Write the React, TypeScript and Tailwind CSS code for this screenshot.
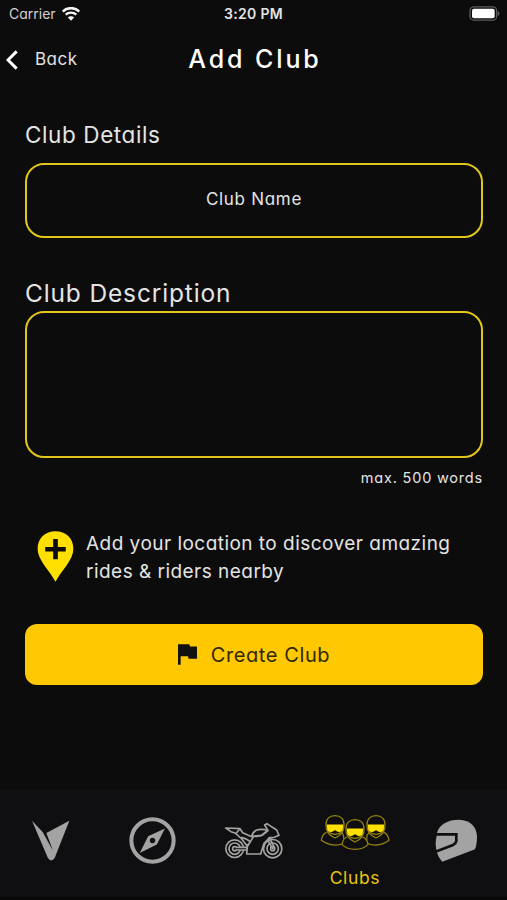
import type { ReactNode } from "react";

function StatusBar() {
    return (
        <div className="flex h-[27px] items-center justify-between pr-[7px] pl-[9px] font-['Inter',sans-serif]">
            <div className="flex w-[90px] items-center gap-[6px]">
                <span className="text-[14px] text-[#d2d2d2]">Carrier</span>
                <svg viewBox="0 0 54 42" className="h-[14px] w-[18px]" fill="none" stroke="#f2f2f2">
                    <path d="M2 13.5C16 0 38 0 52 13.5" strokeWidth="7.5" />
                    <path d="M11 23C20 15 34 15 43 23" strokeWidth="7" />
                    <path d="M27 41L17.5 31.5C22 26 32 26 36.5 31.5Z" fill="#f2f2f2" stroke="none" />
                </svg>
            </div>
            <span className="pr-[2px] text-[14px] font-semibold tracking-[0.35px] text-[#e4e4e4]">3:20 PM</span>
            <div className="flex w-[90px] justify-end">
                <svg viewBox="0 0 93 45" className="h-[15px] w-[31px]">
                    <rect x="3" y="2.5" width="80" height="40" rx="12" fill="#0c0c0c" stroke="#5c5c5c" strokeWidth="4" />
                    <rect x="9" y="8" width="68" height="29" rx="6" fill="#fff" />
                    <path d="M86 15C93 18 93 27 86 30Z" fill="#5c5c5c" />
                </svg>
            </div>
        </div>
    );
}

function Header() {
    return (
        <header className="grid h-[66px] grid-cols-[120px_1fr_120px] items-center">
            <button className="flex items-center gap-[17px] pl-[6px] text-[17px] tracking-[0.5px] text-[#e2e2e2]">
                <svg viewBox="0 0 36 60" className="h-5 w-3" fill="none" stroke="#fff" strokeWidth="9">
                    <path d="M32 4L6 30L32 56" />
                </svg>
                Back
            </button>
            <h1 className="pl-[3px] text-center text-[25px] font-medium tracking-[2.9px] whitespace-nowrap text-white">
                Add Club
            </h1>
        </header>
    );
}

function VeeIcon() {
    return (
        <svg viewBox="69 122 114 123" className="h-[41px] w-[38px]" fill="#a3a3a3">
            <path d="M69 124L101 158L132 214L112 161L181 124L137 236Q127 250 117 237Z" />
        </svg>
    );
}

function CompassIcon() {
    return (
        <svg viewBox="0 0 140 140" className="h-[47px] w-[47px]">
            <circle cx="70" cy="70" r="63" fill="none" stroke="#a3a3a3" strokeWidth="12" />
            <path d="M107 34L83 82L32 107L57 57Z" fill="#a3a3a3" />
            <circle cx="70" cy="70" r="8" fill="#0f0f11" />
        </svg>
    );
}

function BikeIcon() {
    return (
        <svg
            viewBox="40 66 180 111"
            className="h-[37px] w-[60px]"
            fill="none"
            stroke="#a3a3a3"
            strokeWidth="5"
            strokeLinejoin="round"
        >
            <circle cx="75" cy="146" r="26.5" />
            <circle cx="75" cy="146" r="17" />
            <circle cx="75" cy="146" r="6" />
            <circle cx="189" cy="146" r="27.5" />
            <circle cx="189" cy="146" r="17" />
            <circle cx="189" cy="146" r="6" />
            <path d="M78 142H112V150H78" fill="#0f0f11" />
            <path d="M48 84L91 86L99 98L126 110L134 107L126 125L112 137L96 117L78 100L64 95Z" fill="#0f0f11" />
            <path d="M91 86L80 99M94 112C109 115 118 121 124 127" />
            <path
                d="M175 92L165 75L172 71L184 79L201 90L208 106L194 112L180 113L163 130L153 162H111L113 140L132 109C145 109 153 108 160 104Z"
                fill="#0f0f11"
            />
            <path d="M126 108C132 91 143 86 167 89L173 92L155 106L134 108Z" fill="#0f0f11" />
            <path d="M178 112L177 126L189 146L194 142L184 123L183 113" />
        </svg>
    );
}

function Rider() {
    return (
        <>
            <path d="M-27 0C-28 -18 -17 -28 0 -28S28 -18 27 0C28 19 17 32 0 39C-17 32 -28 19 -27 0Z" fill="#0f0f11" />
            <path d="M-23 13C-15 33 15 33 23 13" />
            <path d="M-23 0H23L21 15C17 21 7 20 3 15H-3C-7 20 -17 21 -21 15Z" fill="#ffe000" stroke="#ffe000" />
        </>
    );
}

function ClubsIcon() {
    return (
        <svg viewBox="30 40 210 111" className="h-[37px] w-[70px]" fill="none" stroke="#98860c" strokeWidth="3.6">
            <path d="M50 95C39 98 36 106 34 119C55 135 86 137 103 127L100 103L95 95" />
            <path d="M221 95C231 98 235 106 237 119C217 135 187 137 170 127L171 103L179 95" />
            <g transform="translate(75 73)">
                <Rider />
            </g>
            <g transform="translate(198 73)">
                <Rider />
            </g>
            <path d="M111 109C101 112 98 120 96 132C116 151 154 151 174 132C172 120 168 112 158 109" fill="#0f0f11" />
            <g transform="translate(135 85)">
                <Rider />
            </g>
        </svg>
    );
}

function HelmetIcon() {
    return (
        <svg viewBox="45 58 129 129" className="h-[43px] w-[43px]">
            <path d="M51 99C58 74 83 60 117 60C152 61 170 82 171 111C171 125 169 139 165 149L67 186C55 175 47 155 47 128Z" fill="#a3a3a3" />
            <path d="M46 104H109V124C108 131 106 132 99 136L44 157" fill="none" stroke="#0f0f11" strokeWidth="8" />
        </svg>
    );
}

function TabItem({ label, children }: { label?: string; children: ReactNode }) {
    return (
        <button className="flex flex-col items-center">
            <span className={label ? "flex h-[84px] items-center" : "flex h-[101px] items-center"}>{children}</span>
            {label && <span className="text-[17.5px] leading-[8px] tracking-[0.6px] text-[#e6c60a]">{label}</span>}
        </button>
    );
}

export default function App() {
    return (
        <div className="flex h-[900px] w-[507px] flex-col overflow-hidden bg-[#0c0c0c] font-['Inter',sans-serif] text-[#e4e4e4] [font-feature-settings:'cv11','ss03']">
            <StatusBar />
            <Header />

            <main className="flex flex-1 flex-col pt-[24px] pr-[24px] pl-[25px]">
                <label className="text-[22.5px] leading-9 tracking-[0.6px]">Club Details</label>
                <div className="mt-[10px] flex h-[75px] items-center justify-center rounded-[19px] border-2 border-[#e2c619] pb-[2px] text-[17px] tracking-[0.7px]">
                    Club Name
                </div>

                <label className="mt-[37px] text-[24.5px] leading-9 tracking-[0.85px]">Club Description</label>
                <div className="h-[147px] rounded-[19px] border-2 border-[#e2c619]"></div>
                <p className="mt-[8px] text-right text-[14.5px] leading-6 tracking-[0.8px]">max. 500 words</p>

                <div className="mt-[39px] flex h-14 gap-[12px] pl-[12px]">
                    <svg viewBox="0 0 110 154" className="mt-[2px] h-[51px] w-[37px] shrink-0">
                        <path d="M55 153C38 120 1 87 1 54C1 22 24 1 55 1S109 22 109 54C109 87 72 120 55 153Z" fill="#ffe000" />
                        <path d="M55 24V85M24 55H86" stroke="#0c0c0c" strokeWidth="14" />
                    </svg>
                    <p className="pt-px text-[19px] leading-7 tracking-[0.47px] whitespace-nowrap">
                        Add your location to discover amazing
                        <br />
                        rides &amp; riders nearby
                    </p>
                </div>

                <button className="mt-[39px] flex h-[61px] items-center justify-center gap-[14px] rounded-[12px] bg-[#ffc800] text-[20px] tracking-[0.6px] text-[#302704]">
                    <svg viewBox="0 0 57 62" className="h-[21px] w-[19px]" fill="#111">
                        <path d="M0 0H34L36 7H57V44H32L30 36H8V62H0Z" />
                    </svg>
                    Create Club
                </button>
            </main>

            <nav className="grid h-[110px] grid-cols-5 border-b-3 border-[#090809] bg-[#0f0f11]">
                <TabItem>
                    <VeeIcon />
                </TabItem>
                <TabItem>
                    <CompassIcon />
                </TabItem>
                <TabItem>
                    <BikeIcon />
                </TabItem>
                <TabItem label="Clubs">
                    <ClubsIcon />
                </TabItem>
                <TabItem>
                    <HelmetIcon />
                </TabItem>
            </nav>
        </div>
    );
}
